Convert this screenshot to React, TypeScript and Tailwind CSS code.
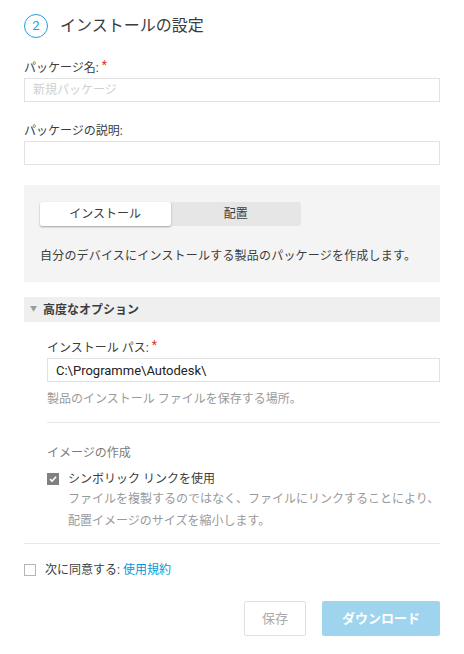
import { useState } from 'react'

const font = { fontFamily: 'Roboto, "Noto Sans CJK JP", sans-serif' }

function Label({ text, required }: { text: string; required?: boolean }) {
  return (
    <p className="text-[12px] leading-[16px] text-[#3c3c3c] flex items-start">
      {text}
      {required && <span className="text-[#e1322c] ml-[3px] -mt-[3px]">*</span>}
    </p>
  )
}

export default function App() {
  const [tab, setTab] = useState<'install' | 'deploy'>('install')
  const [symlink, setSymlink] = useState(true)
  const [agree, setAgree] = useState(false)

  return (
    <div className="w-[464px] h-[654px] bg-white px-6 pt-[14px]" style={font}>
      {/* Step header */}
      <div className="flex items-center gap-3">
        <span className="w-6 h-6 rounded-full border-[1.5px] border-[#1f9fe0] text-[#1f9fe0] text-[13px] flex items-center justify-center">
          2
        </span>
        <h1 className="text-[16px] text-[#3c3c3c]">インストールの設定</h1>
      </div>

      {/* Package name */}
      <div className="mt-[22px]">
        <Label text="パッケージ名:" required />
        <input
          placeholder="新規パッケージ"
          className="mt-[2px] w-full h-6 border border-[#e2e2e2] px-2 text-[12px] placeholder:text-[#cfcfcf] outline-none"
        />
      </div>

      <div className="mt-[21px]">
        <Label text="パッケージの説明:" />
        <input className="mt-[2px] w-full h-6 border border-[#e2e2e2] px-2 text-[12px] outline-none" />
      </div>

      {/* Install / deploy panel */}
      <div className="mt-[20px] bg-[#f4f4f4] h-[97px] px-4 pt-[17px]">
        <div className="flex w-[261px] h-6 bg-[#e6e6e6] rounded-[2px]">
          <button
            onClick={() => setTab('install')}
            className={`flex-1 text-[12px] rounded-[2px] ${tab === 'install' ? 'bg-white shadow-[0_1px_2px_rgba(0,0,0,0.35)] text-[#3c3c3c]' : 'text-[#3c3c3c]'}`}
          >
            インストール
          </button>
          <button
            onClick={() => setTab('deploy')}
            className={`flex-1 text-[12px] rounded-[2px] ${tab === 'deploy' ? 'bg-white shadow-[0_1px_2px_rgba(0,0,0,0.35)] text-[#3c3c3c]' : 'text-[#3c3c3c]'}`}
          >
            配置
          </button>
        </div>
        <p className="mt-[21px] text-[12px] tracking-[0.2px] text-[#3c3c3c]">
          自分のデバイスにインストールする製品のパッケージを作成します。
        </p>
      </div>

      {/* Advanced options */}
      <div className="mt-[15px] h-[25px] bg-[#efefef] flex items-center pl-[6px] gap-[6px]">
        <span className="text-[#9a9a9a] text-[7px]">▼</span>
        <span className="text-[12px] font-bold text-[#3c3c3c]">高度なオプション</span>
      </div>

      <div className="pl-[23px]">
        <div className="mt-[18px]">
          <Label text="インストール パス:" required />
          <input
            defaultValue="C:\Programme\Autodesk\"
            className="mt-[2px] w-full h-6 border border-[#e2e2e2] px-2 text-[13px] text-[#222] outline-none"
          />
          <p className="mt-[8px] text-[12px] text-[#9a9a9a]">製品のインストール ファイルを保存する場所。</p>
        </div>

        <div className="mt-[14px] border-t border-[#e8e8e8]" />

        <p className="mt-[21px] text-[12px] text-[#7a7a7a]">イメージの作成</p>

        <div className="mt-[8px] flex gap-[9px]">
          <button
            onClick={() => setSymlink(!symlink)}
            className={`mt-[3px] w-3 h-3 shrink-0 flex items-center justify-center ${symlink ? 'bg-[#808080]' : 'border border-[#bbb]'}`}
          >
            {symlink && (
              <svg width="8" height="8" viewBox="0 0 8 8">
                <path d="M1 4.2 L3.1 6.2 L7 1.8" stroke="white" strokeWidth="1.6" fill="none" />
              </svg>
            )}
          </button>
          <div>
            <p className="text-[12px] leading-[18px] text-[#3c3c3c]">シンボリック リンクを使用</p>
            <p className="text-[12px] leading-[22px] whitespace-nowrap text-[#9a9a9a]">
              ファイルを複製するのではなく、ファイルにリンクすることにより、
              <br />
              配置イメージのサイズを縮小します。
            </p>
          </div>
        </div>
      </div>

      <div className="mt-[11px] border-t border-[#e8e8e8]" />

      <div className="mt-[17px] flex items-center gap-[9px]">
        <button
          onClick={() => setAgree(!agree)}
          className={`w-3 h-3 border ${agree ? 'bg-[#808080] border-[#808080]' : 'border-[#b5b5b5] bg-white'}`}
        />
        <p className="text-[12px] text-[#3c3c3c]">
          次に同意する: <span className="text-[#0696d7]">使用規約</span>
        </p>
      </div>

      <div className="mt-[22px] flex justify-end gap-4">
        <button className="w-[62px] h-[35px] border border-[#e0e0e0] rounded-[2px] text-[13px] text-[#aaaaaa]">
          保存
        </button>
        <button className="w-[118px] h-[35px] rounded-[2px] bg-[#9fd4ef] text-[13px] font-bold text-white">
          ダウンロード
        </button>
      </div>
    </div>
  )
}
